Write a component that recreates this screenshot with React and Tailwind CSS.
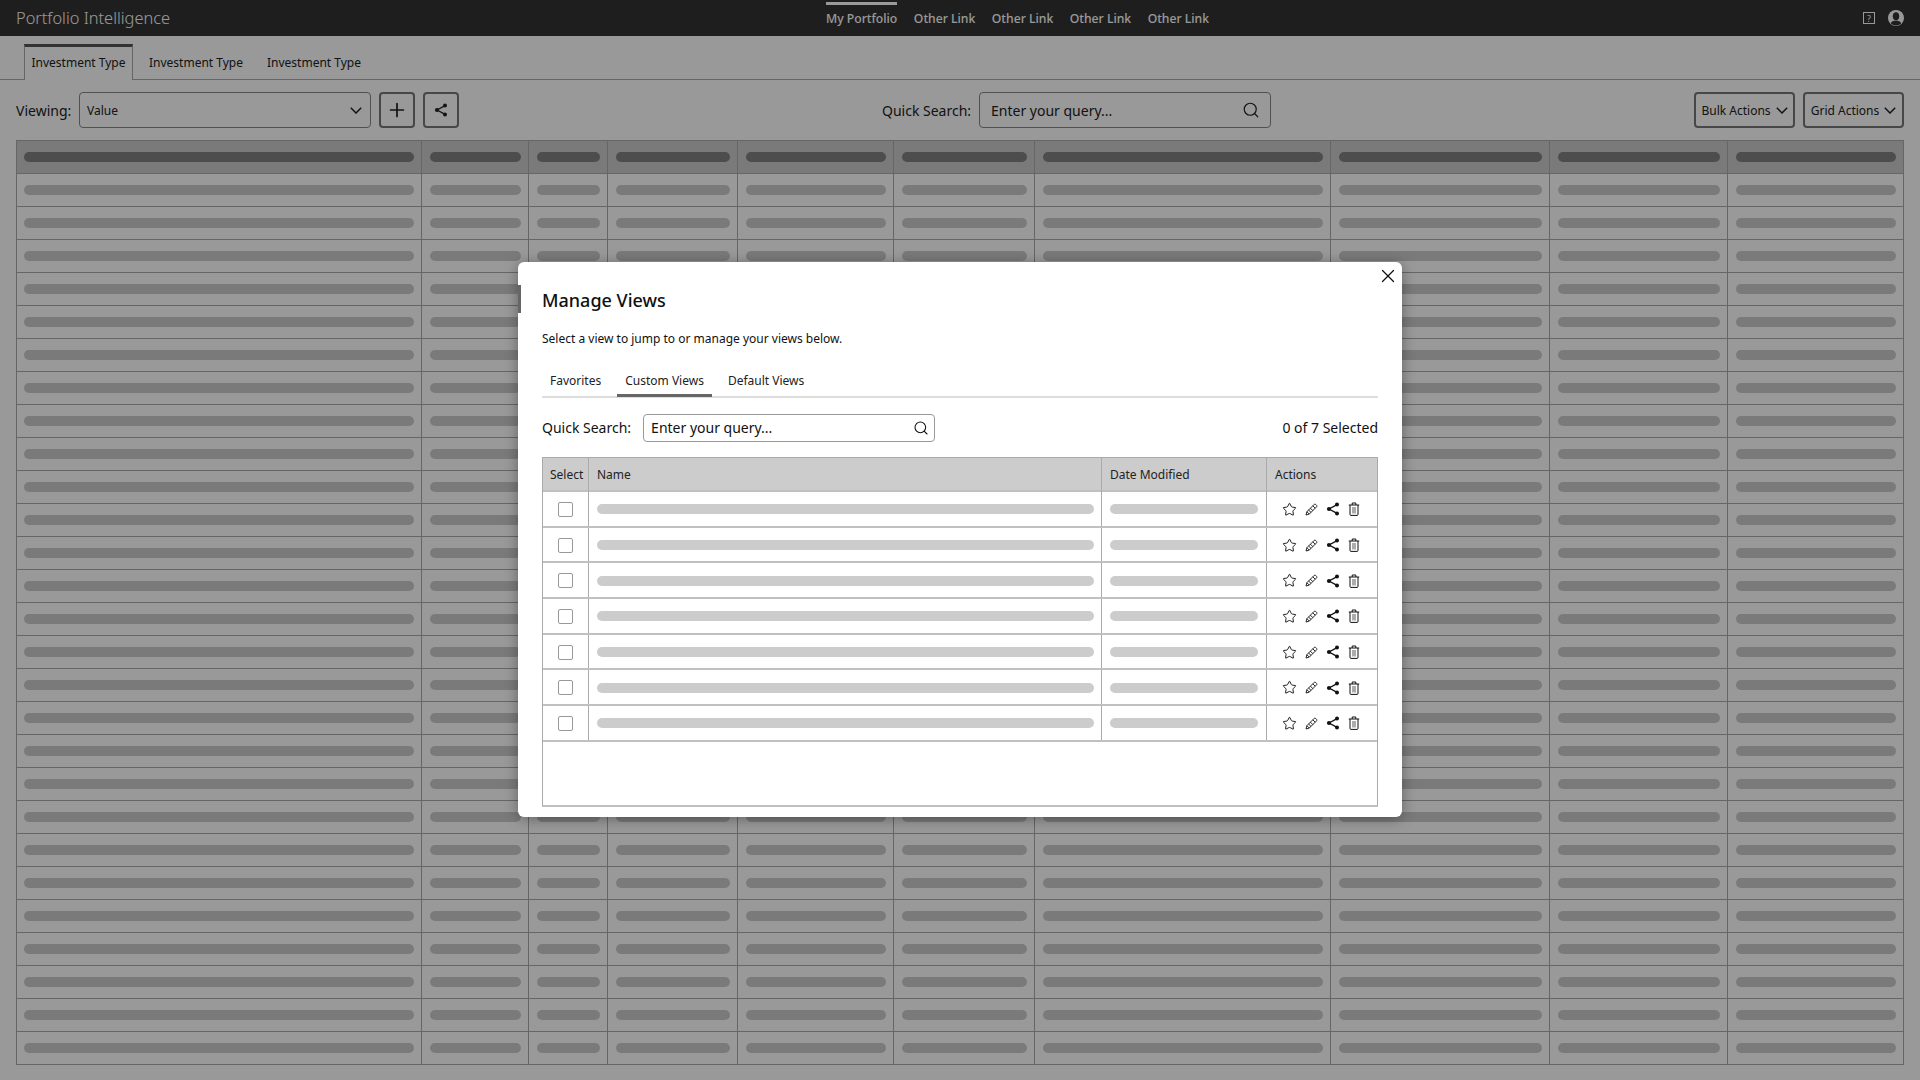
import React from 'react';
import { Plus, Search, X, Star } from 'lucide-react';

const mainCols = 'grid grid-cols-[405px_107px_79px_130px_156px_141px_296px_219px_178px_176px]';
const viewCols = 'grid grid-cols-[46px_513px_165px_110px]';
const columns = Array.from({ length: 10 });
const rows = Array.from({ length: 27 });
const views = Array.from({ length: 7 });

function Chevron() {
  return (
    <svg width="12" height="7" viewBox="0 0 12 7" fill="none" stroke="currentColor" strokeWidth="1.5" className="shrink-0">
      <path d="M.8.8 6 6l5.2-5.2" />
    </svg>
  );
}

function ShareIcon({ size = 14 }) {
  return (
    <svg width={size} height={size} viewBox="0 0 14 14" fill="currentColor" stroke="currentColor">
      <line x1="11" y1="2.6" x2="3" y2="7" strokeWidth="1.4" />
      <line x1="11" y1="11.4" x2="3" y2="7" strokeWidth="1.4" />
      <circle cx="11" cy="2.6" r="2" stroke="none" />
      <circle cx="11" cy="11.4" r="2" stroke="none" />
      <circle cx="3" cy="7" r="2.1" stroke="none" />
    </svg>
  );
}

function PencilIcon() {
  return (
    <svg width="13" height="13" viewBox="0 0 13 13" fill="none" stroke="currentColor" strokeWidth="0.9">
      <path d="M1 12l.9-3.3L9.2 1.4a1 1 0 0 1 1.4 0l1 1a1 1 0 0 1 0 1.4L4.3 11.1z" />
      <path d="M1.9 8.7l2.4 2.4M3.6 7l2.4 2.4M5.4 5.2l2.4 2.4M7.8 2.8l2.4 2.4" />
    </svg>
  );
}

function TrashIcon() {
  return (
    <svg width="12" height="14" viewBox="0 0 12 14" fill="none" stroke="currentColor" strokeWidth="1">
      <path d="M.8 3h10.4M4.2 3V1h3.6v2" />
      <path d="M2 3v9.4a1 1 0 0 0 1 1h6a1 1 0 0 0 1-1V3" />
      <rect x="4" y="5" width="4" height="6.5" fill="currentColor" fillOpacity="0.35" stroke="none" />
    </svg>
  );
}

function UserIcon() {
  return (
    <svg width="16" height="16" viewBox="0 0 16 16">
      <circle cx="8" cy="8" r="8" fill="#ffffff" />
      <ellipse cx="8" cy="6.2" rx="3.2" ry="3.9" fill="#333333" />
      <path d="M2.8 13.4c.5-2.3 2.9-3 5.2-3s4.7.7 5.2 3A7.4 7.4 0 0 1 8 15.4a7.4 7.4 0 0 1-5.2-2z" fill="#333333" />
    </svg>
  );
}

function Bar({ dark }) {
  return <div className={`h-[10px] rounded-full ${dark ? 'bg-[#808080]' : 'bg-[#cccccc]'}`} />;
}

function Cell({ first, dark }) {
  return (
    <div className={`flex flex-col justify-center border-r border-b border-[#aaaaaa] pr-[7px] ${first ? 'pl-[7px]' : 'pl-2'}`}>
      <Bar dark={dark} />
    </div>
  );
}

function MainTable() {
  return (
    <div className="mx-4 mt-3 border-t border-l border-[#aaaaaa]">
      <div className={`${mainCols} h-[33px] bg-[#cccccc]`}>
        {columns.map((_, i) => <Cell key={i} first={i === 0} dark />)}
      </div>
      {rows.map((_, r) => (
        <div key={r} className={`${mainCols} h-[33px]`}>
          {columns.map((_, i) => <Cell key={i} first={i === 0} />)}
        </div>
      ))}
    </div>
  );
}

function Modal() {
  return (
    <div className="absolute inset-0 flex items-start justify-center bg-black/40 pt-[262px]">
      <div className="relative h-[555px] w-[884px] rounded-md bg-white px-6 text-[#111111] shadow-[0_2px_14px_rgba(0,0,0,0.35)]">
        <div className="absolute left-0 top-[23px] h-[28px] w-[3px] bg-[#666666]" />
        <button className="absolute right-[3px] top-[3px] text-[#111111]">
          <X size={22} strokeWidth={1.4} />
        </button>
        <h2 className="pt-[24px] text-[18px] font-medium leading-[28px]">Manage Views</h2>
        <p className="mt-[15px] text-[12px] leading-[20px]">Select a view to jump to or manage your views below.</p>
        <div className="mt-[14px] flex h-[35px] gap-2 border-b-2 border-[#dddddd] text-[12px] text-[#222222]">
          <div className="h-[34px] px-2 pt-[9px] leading-[18px]">Favorites</div>
          <div className="h-[34px] border-b-[3px] border-[#666666] px-2 pt-[9px] leading-[18px]">Custom Views</div>
          <div className="h-[34px] px-2 pt-[9px] leading-[18px]">Default Views</div>
        </div>
        <div className="mt-[16px] flex h-[28px] items-center text-[14px]">
          <span className="-translate-y-px">Quick Search:</span>
          <div className="ml-3 flex h-[28px] w-[292px] items-center justify-between rounded border border-[#999999] pl-[7px] pr-[5px]">
            <span className="-translate-y-px">Enter your query...</span>
            <Search size={16} strokeWidth={1.6} />
          </div>
          <span className="ml-auto -translate-y-px">0 of 7 Selected</span>
        </div>
        <div className="mt-[15px] h-[350px] border border-[#aaaaaa] border-b-2 border-b-[#c0c0c0]">
          <div className={`${viewCols} h-[32px] bg-[#cccccc] text-[12px] leading-[34px] text-[#222222]`}>
            <div className="border-r border-[#aaaaaa] pl-[7px]">Select</div>
            <div className="border-r border-[#aaaaaa] pl-2">Name</div>
            <div className="border-r border-[#aaaaaa] pl-2">Date Modified</div>
            <div className="pl-2">Actions</div>
          </div>
          {views.map((_, i) => (
            <div key={i} className={`${viewCols} h-[35.7px] border-t-2 border-[#c0c0c0]`}>
              <div className="flex items-center justify-center border-r border-[#aaaaaa] pt-px">
                <div className="h-[15px] w-[15px] rounded-[2px] border-[1.5px] border-[#999999]" />
              </div>
              <div className="flex flex-col justify-center border-r border-[#aaaaaa] pl-2 pr-[7px] pt-px"><Bar /></div>
              <div className="flex flex-col justify-center border-r border-[#aaaaaa] pl-2 pr-2 pt-px"><Bar /></div>
              <div className="flex items-center gap-[8px] pl-[15px] pt-px text-[#111111]">
                <Star size={15} strokeWidth={1.5} />
                <PencilIcon />
                <ShareIcon />
                <TrashIcon />
              </div>
            </div>
          ))}
          <div className="border-t-2 border-[#c0c0c0]" />
        </div>
      </div>
    </div>
  );
}

export default function App() {
  return (
    <div className="relative h-[1080px] w-full overflow-hidden bg-white font-['Noto_Sans',sans-serif] text-[#222222]">
      <header className="flex h-9 items-center bg-[#333333] pl-4 pr-4 text-white">
        <div className="w-[810px] text-[16.4px] font-light">Portfolio Intelligence</div>
        <nav className="flex h-9 gap-[16.5px] text-[12.2px] font-medium">
          <div className="mt-[2px] flex h-[34px] items-center border-t-[3px] border-white pb-[2px]">My Portfolio</div>
          <div className="flex items-center pt-[2px]">Other Link</div>
          <div className="flex items-center pt-[2px]">Other Link</div>
          <div className="flex items-center pt-[2px]">Other Link</div>
          <div className="flex items-center pt-[2px]">Other Link</div>
        </nav>
        <div className="ml-auto flex items-center gap-[13px]">
          <div className="flex h-[12px] w-[12px] items-center justify-center border border-white text-[9px] leading-none">?</div>
          <UserIcon />
        </div>
      </header>

      <div className="flex h-[44px] items-end gap-2 border-b border-[#aaaaaa] pl-6 text-[12px]">
        <div className="relative top-px h-[36px] w-[109px] border-x border-t-[3px] border-x-[#aaaaaa] border-t-[#555555] bg-white pt-[6px] text-center leading-[20px]">Investment Type</div>
        <div className="h-[36px] px-2 pt-[10px] leading-[20px]">Investment Type</div>
        <div className="h-[36px] px-2 pt-[10px] leading-[20px]">Investment Type</div>
      </div>

      <div className="mt-3 flex h-9 items-center px-4">
        <span className="w-[63px] text-[14px]">Viewing:</span>
        <div className="flex h-9 w-[292px] items-center justify-between rounded border border-[#888888] pl-[7px] pr-2 text-[12px]">
          <span className="translate-y-px">Value</span>
          <Chevron />
        </div>
        <button className="ml-2 flex h-9 w-9 items-center justify-center rounded border-2 border-[#777777]">
          <Plus size={22} strokeWidth={1.9} />
        </button>
        <button className="ml-2 flex h-9 w-9 items-center justify-center rounded border-2 border-[#777777]">
          <ShareIcon />
        </button>
        <span className="ml-[423px] w-[97px] text-[14px]">Quick Search:</span>
        <div className="flex h-9 w-[292px] items-center justify-between rounded border border-[#888888] pl-[11px] pr-[10px] text-[14px]">
          <span>Enter your query...</span>
          <Search size={18} strokeWidth={1.6} />
        </div>
        <button className="ml-auto flex h-9 w-[101px] items-center justify-center gap-[5px] rounded border-2 border-[#777777] text-[12px]">
          <span className="translate-y-px">Bulk Actions</span> <Chevron />
        </button>
        <button className="ml-2 flex h-9 w-[101px] items-center justify-center gap-[5px] rounded border-2 border-[#777777] text-[12px]">
          <span className="translate-y-px">Grid Actions</span> <Chevron />
        </button>
      </div>

      <MainTable />
      <Modal />
    </div>
  );
}
